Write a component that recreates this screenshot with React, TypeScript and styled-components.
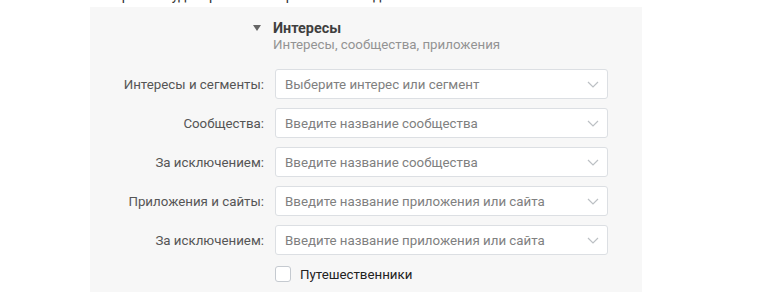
import React from 'react'
import styled, { createGlobalStyle } from 'styled-components'

const GlobalStyle = createGlobalStyle`
  body {
    margin: 0;
    background: #fff;
    font-family: Roboto, "Noto Sans", Arial, sans-serif;
  }
`

const Page = styled.div`
  width: 780px;
  height: 304px;
  overflow: hidden;
`

const Caption = styled.div`
  height: 3px;
  margin-left: 90px;
  overflow: hidden;
  display: flex;
  align-items: flex-end;
  font-size: 14px;
  line-height: 17px;
  color: #333;
  white-space: nowrap;
`

const CaptionText = styled.span`
  display: block;
  margin-bottom: -1px;
`

const Panel = styled.section`
  margin: 4px 0 0 90px;
  width: 552px;
  height: 285px;
  box-sizing: border-box;
  background: #f7f7f7;
  padding-top: 13px;
`

const Header = styled.header`
  display: grid;
  grid-template-columns: 174px 333px;
  column-gap: 9px;
  margin-bottom: 16px;
`

const Toggle = styled.div`
  grid-row: span 2;
  justify-self: end;
  padding: 5px 3px 0 0;
  line-height: 0;
`

const Title = styled.div`
  font-size: 14.4px;
  line-height: 17px;
  font-weight: 700;
  color: #3f3f3f;
`

const Subtitle = styled.div`
  font-size: 13.3px;
  line-height: 16px;
  color: #939393;
`

const Form = styled.div`
  display: grid;
  grid-template-columns: 174px 333px;
  column-gap: 11px;
  row-gap: 9px;
  align-items: center;
`

const Label = styled.label`
  justify-self: end;
  font-size: 13.3px;
  color: #555;
  white-space: nowrap;
`

const Field = styled.div`
  height: 30px;
  box-sizing: border-box;
  display: flex;
  align-items: center;
  justify-content: space-between;
  padding: 0 8px 0 9px;
  background: #fff;
  border: 1px solid #dcdfe3;
  border-radius: 3px;
  font-size: 13.3px;
  color: #808080;
`

const Check = styled.label`
  grid-column: 2;
  display: flex;
  align-items: center;
  gap: 9px;
  margin-top: 2px;
  font-size: 13.3px;
  color: #222;
`

const Box = styled.span`
  width: 16px;
  height: 16px;
  box-sizing: border-box;
  background: #fff;
  border: 1px solid #c5cad0;
  border-radius: 3px;
`

const Triangle = () => (
  <svg width="8" height="6" viewBox="0 0 8 6">
    <path d="M0 0h8L4 6z" fill="#666" />
  </svg>
)

const Chevron = () => (
  <svg width="12" height="7" viewBox="0 0 12 7" fill="none">
    <path d="M1 1l5 5 5-5" stroke="#bcc0c4" strokeWidth="1.2" />
  </svg>
)

const rows = [
  { label: 'Интересы и сегменты:', hint: 'Выберите интерес или сегмент' },
  { label: 'Сообщества:', hint: 'Введите название сообщества' },
  { label: 'За исключением:', hint: 'Введите название сообщества' },
  { label: 'Приложения и сайты:', hint: 'Введите название приложения или сайта' },
  { label: 'За исключением:', hint: 'Введите название приложения или сайта' }
]

function App () {
  return (
    <Page>
      <GlobalStyle />
      <Caption>
        <CaptionText>Настройка аудитории по интересам и поведению пользователей ВКонтакте</CaptionText>
      </Caption>
      <Panel>
        <Header>
          <Toggle><Triangle /></Toggle>
          <Title>Интересы</Title>
          <Subtitle>Интересы, сообщества, приложения</Subtitle>
        </Header>
        <Form>
          {rows.map((it, i) => (
            <React.Fragment key={i}>
              <Label>{it.label}</Label>
              <Field>
                {it.hint}
                <Chevron />
              </Field>
            </React.Fragment>
          ))}
          <Check>
            <Box />
            Путешественники
          </Check>
        </Form>
      </Panel>
    </Page>
  )
}

export default App
